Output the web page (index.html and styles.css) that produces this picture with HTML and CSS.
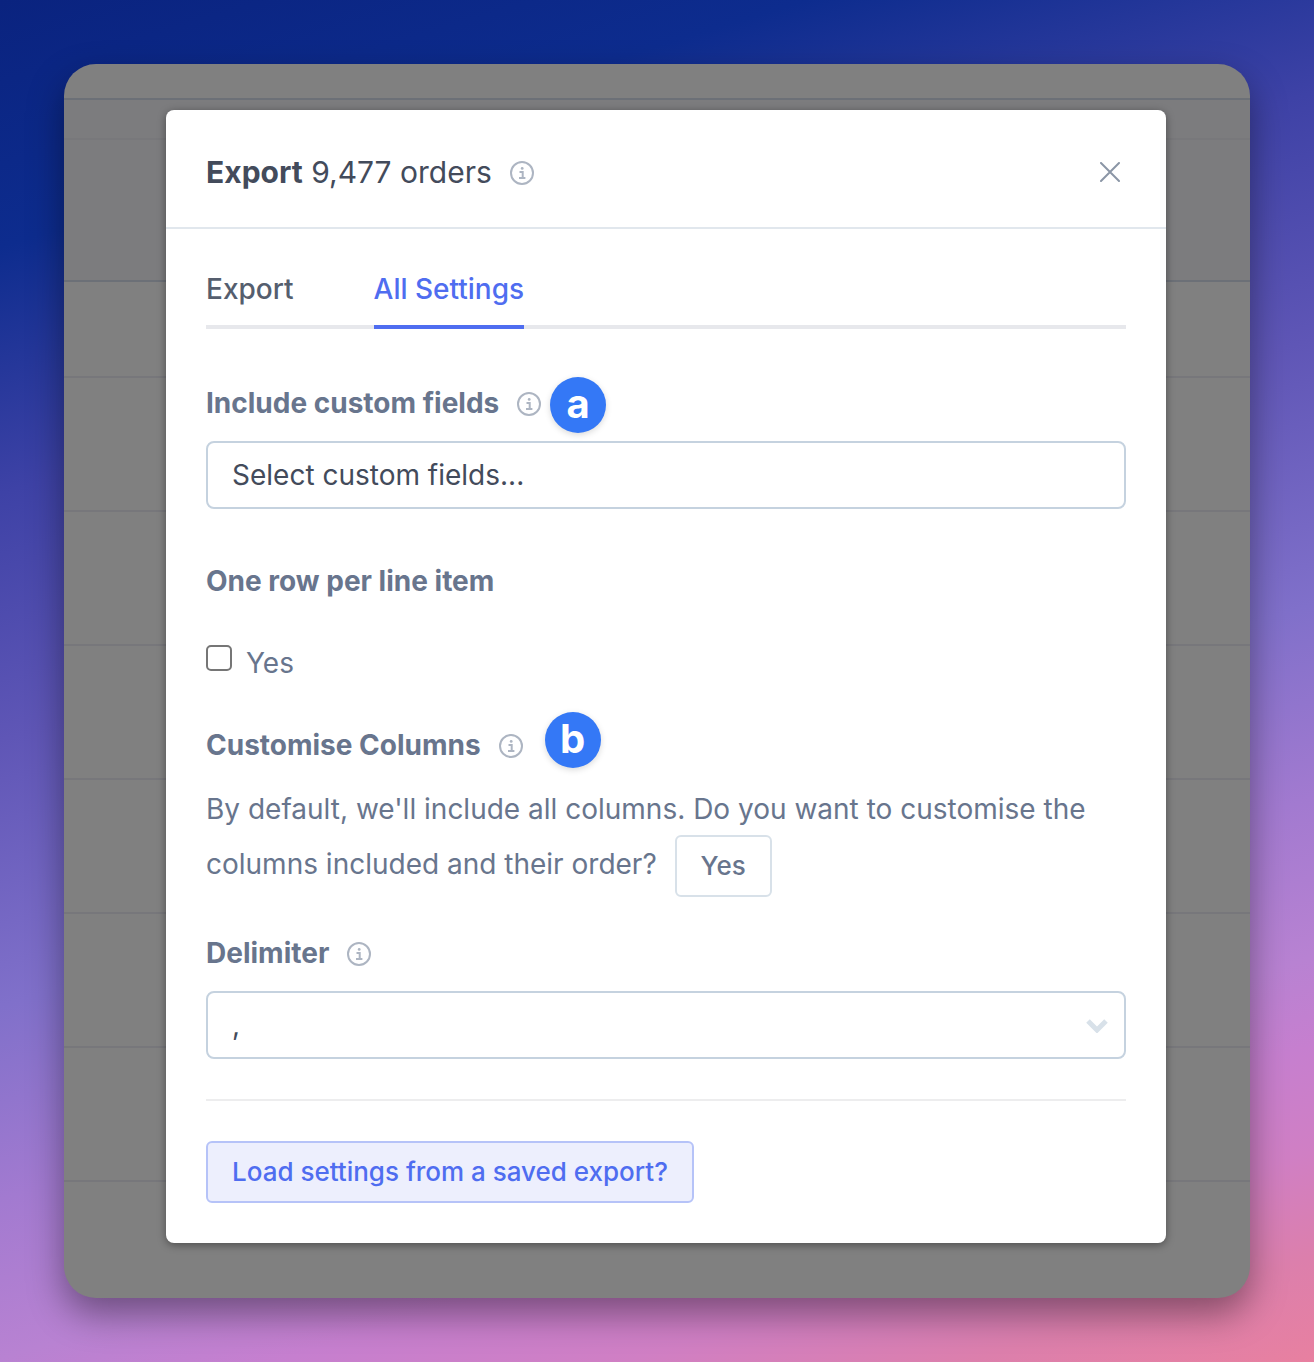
FILE: index.html
```html
<!DOCTYPE html>
<html lang="en">
<head>
    <meta charset="UTF-8">
    <meta name="viewport" content="width=device-width, initial-scale=1.0">
    <title>Export orders</title>
    <link rel="stylesheet" href="styles.css">
</head>
<body>
    <svg class="sprite" aria-hidden="true">
        <symbol id="icon-info" viewBox="0 0 24 24">
            <circle cx="12" cy="12" r="11" fill="none" stroke="currentColor" stroke-width="2"/>
            <path d="M9.5 11h3.2v5.6M9 17h6.4" fill="none" stroke="currentColor" stroke-width="2"/>
            <circle cx="12.2" cy="7.4" r="1.4" fill="currentColor"/>
        </symbol>
    </svg>

    <main class="window">
        <!-- dimmed order list behind the dialog -->
        <div class="backdrop" aria-hidden="true">
            <div class="bar bar-top"></div>
            <div class="bar bar-filter"></div>
            <div class="bar bar-head"></div>
            <div class="row row-first"></div>
            <div class="row"></div>
            <div class="row"></div>
            <div class="row"></div>
            <div class="row"></div>
            <div class="row"></div>
            <div class="row"></div>
        </div>

        <section class="dialog" role="dialog" aria-labelledby="dialog-title">
            <header class="dialog-header">
                <h1 id="dialog-title"><strong>Export</strong> 9,477 orders</h1>
                <svg class="info"><use href="#icon-info"/></svg>
                <button class="close-btn" type="button" aria-label="Close">
                    <svg viewBox="0 0 20 20" width="20" height="20"><path d="M1 1l18 18M19 1L1 19" fill="none" stroke="currentColor" stroke-width="2" stroke-linecap="round"/></svg>
                </button>
            </header>

            <form class="dialog-body">
                <nav class="tabs">
                    <a href="#export" class="tab">Export</a>
                    <a href="#settings" class="tab active">All Settings</a>
                </nav>

                <div class="field field-custom">
                    <div class="label-row">
                        <label for="custom-fields">Include custom fields</label>
                        <svg class="info"><use href="#icon-info"/></svg>
                        <span class="badge badge-a">a</span>
                    </div>
                    <input class="control" type="text" id="custom-fields" placeholder="Select custom fields...">
                </div>

                <fieldset class="field field-rows">
                    <legend>One row per line item</legend>
                    <label class="check"><input type="checkbox"> Yes</label>
                </fieldset>

                <div class="field field-columns">
                    <div class="label-row">
                        <h2>Customise Columns</h2>
                        <svg class="info"><use href="#icon-info"/></svg>
                        <span class="badge badge-b">b</span>
                    </div>
                    <p>By default, we'll include all columns. Do you want to customise the columns included and their order? <button class="btn" type="button">Yes</button></p>
                </div>

                <div class="field field-delimiter">
                    <div class="label-row">
                        <label for="delimiter">Delimiter</label>
                        <svg class="info"><use href="#icon-info"/></svg>
                    </div>
                    <div class="select-wrap">
                        <select class="control" id="delimiter">
                            <option>,</option>
                            <option>;</option>
                        </select>
                        <svg class="chevron" viewBox="0 0 22 15"><path d="M2 3l9 9 9-9" fill="none" stroke="currentColor" stroke-width="5"/></svg>
                    </div>
                </div>

                <hr>
                <button class="btn btn-primary" type="button">Load settings from a saved export?</button>
            </form>
        </section>
    </main>
</body>
</html>
```
FILE: styles.css
```css
* {
    box-sizing: border-box;
}
body {
    margin: 0;
    min-height: 100vh;
    padding: 64px;
    font-family: Inter, Arial, sans-serif;
    font-size: 28px;
    line-height: 40px;
    color: #68758d;
    background: linear-gradient(163deg, #0a237f 0%, #0d2c8e 14%, #3e42a6 28%, #5f56b6 42%, #8070ca 57%, #a27ad0 68%, #b882d2 77%, #c67fcf 82%, #d07fc4 88%, #dc7fac 94%, #e880a0 100%);
}
.sprite {
    position: absolute;
    width: 0;
    height: 0;
}
.window {
    display: grid;
    border-radius: 32px;
    background: #808080;
    overflow: hidden;
    box-shadow: 0 16px 36px rgba(0, 0, 0, 0.4);
}
.backdrop,
.dialog {
    grid-area: 1 / 1;
}

/* Order list */
.bar,
.row {
    border-bottom: 2px solid #77777b;
}
.bar-top {
    height: 36px;
    border-color: #6c7077;
}
.bar-filter {
    height: 40px;
    background: #7c7c7e;
    border-color: #78787b;
}
.bar-head {
    height: 142px;
    background: #7c7c7e;
    border-color: #6c7077;
}
.row {
    height: 134px;
}
.row-first {
    height: 96px;
}

/* Dialog */
.dialog {
    margin: 46px 84px 55px 102px;
    background: #fff;
    border-radius: 8px;
    box-shadow: 0 2px 8px rgba(0, 0, 0, 0.4);
}
.dialog-header {
    display: flex;
    align-items: center;
    padding: 42px 40px 35px;
    border-bottom: 2px solid #e1e7ed;
}
h1 {
    margin: 0;
    font-size: 30px;
    font-weight: 400;
    color: #434b5b;
}
h1 strong {
    font-weight: 700;
}
.info {
    flex: none;
    width: 24px;
    height: 24px;
    margin: 2px 0 0 18px;
    color: #adb5c2;
}
.close-btn {
    display: flex;
    margin-left: auto;
    padding: 6px;
    border: 0;
    background: none;
    color: #8b96a6;
    cursor: pointer;
}
.dialog-body {
    padding: 40px;
}
.tabs {
    display: flex;
    gap: 80px;
    border-bottom: 4px solid #e7e8ec;
}
.tab {
    margin-bottom: -4px;
    padding-bottom: 16px;
    border-bottom: 4px solid transparent;
    font-weight: 500;
    color: #555e6e;
    text-decoration: none;
}
.tab.active {
    color: #4f6df0;
    border-color: #4f6df0;
}

/* Fields */
.field {
    margin: 0;
    padding: 0;
    border: 0;
}
.field-custom {
    margin-top: 54px;
}
.field-rows {
    margin-top: 52px;
}
.field-columns {
    margin-top: 42px;
}
.field-delimiter {
    margin-top: 36px;
}
.label-row {
    position: relative;
    display: flex;
    align-items: center;
    width: fit-content;
    margin-bottom: 18px;
    font-weight: 700;
}
h2,
legend {
    margin: 0;
    padding: 0;
    font-size: 28px;
    font-weight: 700;
}
.badge {
    position: absolute;
    left: 100%;
    width: 56px;
    height: 56px;
    border-radius: 50%;
    background: #3478f6;
    box-shadow: 0 2px 6px rgba(0, 0, 0, 0.15);
    color: #fff;
    font-size: 40px;
    line-height: 54px;
    text-align: center;
}
.badge-a {
    top: -6px;
    margin-left: 9px;
}
.badge-b {
    top: -13px;
    margin-left: 22px;
}
.control {
    display: block;
    width: 100%;
    height: 68px;
    padding: 0 24px;
    border: 2px solid #c5d2df;
    border-radius: 8px;
    background: #fff;
    font: inherit;
    color: #434b5b;
    appearance: none;
}
.control::placeholder {
    color: #434b5b;
    opacity: 1;
}
.check {
    display: flex;
    align-items: flex-start;
    gap: 14px;
    width: fit-content;
    margin-top: 42px;
}
.check input {
    width: 26px;
    height: 26px;
    margin: 2px 0 0;
    border: 2px solid #767676;
    border-radius: 5px;
    background: #fff;
    appearance: none;
}
p {
    margin: 0;
    line-height: 52px;
}
.btn {
    height: 62px;
    padding: 0 24px;
    border: 2px solid #d8e1e9;
    border-radius: 6px;
    background: #fff;
    font: inherit;
    font-size: 26px;
    font-weight: 500;
    color: #68758d;
    cursor: pointer;
}
p .btn {
    margin-left: 10px;
    vertical-align: middle;
}
.btn-primary {
    display: block;
    border-color: #b6c3f8;
    background: #edeffd;
    color: #4f6df0;
}
.select-wrap {
    position: relative;
}
.chevron {
    position: absolute;
    top: 27px;
    right: 18px;
    width: 22px;
    height: 15px;
    color: #d8e1e9;
    pointer-events: none;
}
hr {
    height: 2px;
    margin: 40px 0;
    border: 0;
    background: #ededee;
}

@media (max-width: 800px) {
    body {
        padding: 16px;
    }
    .dialog {
        margin: 24px 16px;
    }
}
```
